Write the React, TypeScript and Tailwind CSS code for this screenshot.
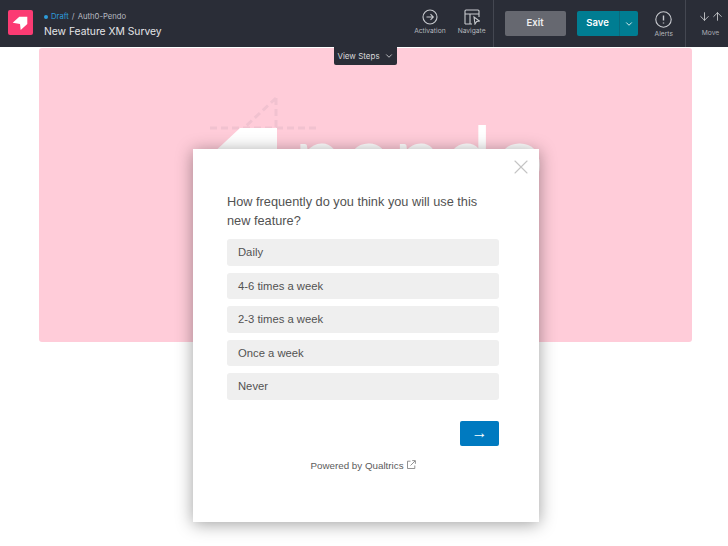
import { ChevronDown, ArrowDown, ArrowUp, X } from "lucide-react";

const options = ["Daily", "4-6 times a week", "2-3 times a week", "Once a week", "Never"];

function Logo() {
  return (
    <div className="self-start mt-[10px] w-[25px] h-[25px] rounded-[2px] bg-[#fb3b73]">
      <svg width="25" height="25" viewBox="0 0 25 25">
        <path d="M4.7 12.7 L11.3 6.7 H19.3 V14 L12.7 20 L12 14 Z" fill="#fff" />
      </svg>
    </div>
  );
}

function ToolButton({ label, children }: { label: string; children: React.ReactNode }) {
  return (
    <div className="flex flex-col items-center gap-[2px]">
      {children}
      <span className="text-[6.7px] leading-[9px] text-[#b4b7bd]">{label}</span>
    </div>
  );
}

export default function App() {
  return (
    <div className="relative w-[728px] h-[546px] bg-white overflow-hidden font-['Inter',sans-serif]">
      <header className="h-[47px] bg-[#2a2d37] flex items-center pl-[8px] text-white">
        <Logo />
        <div className="ml-[11px] mt-px flex flex-col gap-[1px]">
          <div className="flex items-center text-[7.7px] leading-[12px] text-[#b8bac0]">
            <span className="w-[4px] h-[4px] rounded-full bg-[#2d9cdb] mr-[3px]" />
            <span className="text-[#2d9cdb]">Draft</span>
            <span className="mx-[3px]">/</span>
            <span>Auth0-Pendo</span>
          </div>
          <div className="text-[10.3px] leading-[14px] text-[#e4e5e8]">New Feature XM Survey</div>
        </div>
        <div className="ml-auto flex items-center h-full">
          <div className="flex items-start gap-[12px] pr-[7px] h-full border-r border-[#444751] pt-[9px]">
            <ToolButton label="Activation">
              <svg width="16" height="16" viewBox="0 0 16 16" fill="none" stroke="#c8cacf" strokeWidth="1.1">
                <circle cx="8" cy="8" r="7" />
                <path d="M4.5 8 H11 M8.5 5.2 L11.3 8 L8.5 10.8" />
              </svg>
            </ToolButton>
            <ToolButton label="Navigate">
              <svg width="16" height="16" viewBox="0 0 16 16" fill="none" stroke="#c8cacf" strokeWidth="1.1">
                <path d="M1 15 V2 a1 1 0 0 1 1-1 H14 a1 1 0 0 1 1 1 V8 M1 5 H15 M6 5 V15 M1 15 H8" />
                <path d="M10 8 L15.5 12 L12.7 12.4 L11 15 Z" />
              </svg>
            </ToolButton>
          </div>
          <button className="ml-[11px] w-[61px] h-[25px] rounded-[2px] bg-[#666870] text-[9.5px] font-semibold text-[#eeeeef]">
            Exit
          </button>
          <div className="ml-[11px] flex h-[25px] w-[61px] rounded-[2px] overflow-hidden bg-[#007d92] text-white">
            <span className="w-[43px] flex items-center justify-center text-[9.5px] font-semibold border-r border-[#0a6a7c]">Save</span>
            <span className="flex-1 flex items-center justify-center">
              <ChevronDown size={10} strokeWidth={2} />
            </span>
          </div>
          <div className="ml-[17px] mt-[3px]">
            <ToolButton label="Alerts">
              <svg width="17" height="17" viewBox="0 0 17 17" fill="none" stroke="#c8cacf" strokeWidth="1.1">
                <circle cx="8.5" cy="8.5" r="7.7" />
                <path d="M8.5 4.5 V9.5 M8.5 11.5 V12.6" strokeWidth="1.4" />
              </svg>
            </ToolButton>
          </div>
          <div className="ml-[12px] w-[43px] h-full border-l border-[#444751] flex flex-col items-center pl-[7px] pt-[10px] gap-[6px]">
            <div className="flex text-[#d6d7da]">
              <ArrowDown size={13} strokeWidth={1.5} />
              <ArrowUp size={13} strokeWidth={1.5} />
            </div>
            <span className="text-[6.7px] leading-[9px] text-[#a8abb2]">Move</span>
          </div>
        </div>
      </header>

      <div className="absolute left-[334px] top-[47px] w-[63px] h-[18px] rounded-b-[2px] bg-[#2a2d37] z-10 flex items-center justify-center gap-[4px] text-[8px] text-[#d6d7da]">
        View Steps
        <ChevronDown size={10} strokeWidth={2} />
      </div>

      <main className="ml-[39px] mr-[36px] mt-px h-[294px] rounded-[3px] bg-[#ffccd9] overflow-hidden flex justify-center">
        <div className="relative w-[340px] h-[110px] mt-[46px]">
          <svg className="absolute left-[14px] top-[2px]" width="112" height="60" viewBox="0 0 112 60" fill="none">
            <path d="M0 32 H108 M66 2 V32 M66 2 L36 30" stroke="#f1c2d0" strokeWidth="3" strokeDasharray="7 4" />
            <path d="M30 32 H67 V60 H0 Z" fill="#fff" />
          </svg>
          <span className="absolute left-[99px] top-[20px] text-[84px] leading-[80px] font-normal font-['Lato',sans-serif] tracking-[4px] text-white">
            pendo
          </span>
        </div>
      </main>

      <section className="absolute left-[193px] top-[149px] w-[346px] h-[373px] bg-white shadow-[0_2px_16px_rgba(0,0,0,0.38)] pl-[34px] pr-[40px] pt-[43px] font-['Liberation_Sans',sans-serif]">
        <X className="absolute right-[6px] top-[6px] text-[#c4c4c4]" size={24} strokeWidth={1.1} />
        <p className="text-[12.75px] leading-[19px] text-[#525252]">
          How frequently do you think you will use this new feature?
        </p>
        <div className="mt-[9px] flex flex-col gap-[7px]">
          {options.map((o) => (
            <div key={o} className="h-[26.5px] rounded-[3px] bg-[#efefef] px-[11px] pt-px flex items-center text-[11.25px] text-[#525252]">
              {o}
            </div>
          ))}
        </div>
        <div className="mt-[21px] flex justify-end">
          <button className="w-[39px] h-[25px] rounded-[2px] bg-[#007ac0] text-white text-[16px] flex items-center justify-center">
            →
          </button>
        </div>
        <div className="mt-[13px] flex items-center justify-center gap-[3px] text-[9.8px] text-[#5c5c5c]">
          Powered by Qualtrics
          <svg width="9" height="9" viewBox="0 0 9 9" fill="none" stroke="#777" strokeWidth="0.8" className="mb-[2px]">
            <path d="M3.5 1.2 H0.5 V8.5 H7.8 V5.5" />
            <path d="M3.5 5.5 L8 1 M5.2 0.6 H8.4 V3.8" />
          </svg>
        </div>
      </section>
    </div>
  );
}
